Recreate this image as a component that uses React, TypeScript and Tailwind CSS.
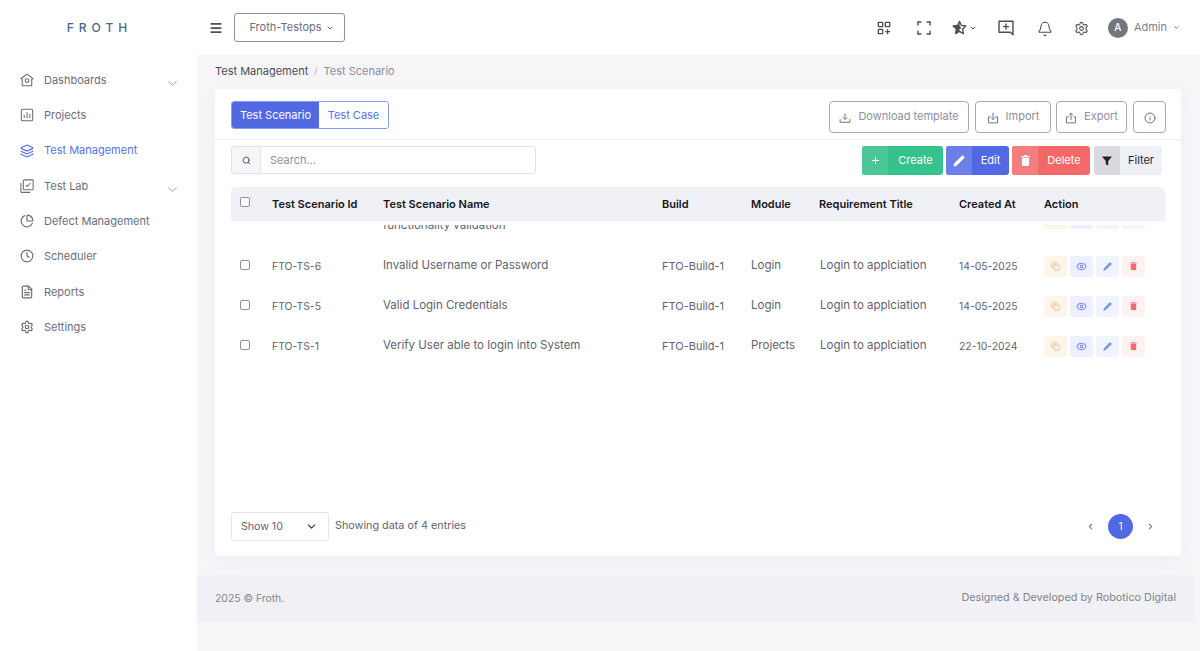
import React from "react";
import { ChevronDown, ChevronLeft, ChevronRight, Layers, ChartPie, Clock, FileText, Settings, Bell, Search, Plus, Pencil, Copy, Eye, Info, Menu } from "lucide-react";

const font = "font-['Inter','Liberation_Sans',sans-serif]";
type IconProps = { className?: string; fill?: string; strokeWidth?: number };

function HomeIcon({ className }: IconProps) {
  return (
    <svg viewBox="0 0 16 16" className={className} fill="none" stroke="currentColor" strokeWidth="1.2" strokeLinejoin="round">
      <path d="M8 1.2L1 6.6l1.6.6v7.3h10.8V7.2l1.6-.6z" />
      <circle cx="8" cy="8.6" r="2.1" />
    </svg>
  );
}
function ChartBox({ className }: IconProps) {
  return (
    <svg viewBox="0 0 16 16" className={className} fill="none" stroke="currentColor" strokeWidth="1.2">
      <rect x="1.5" y="1.5" width="13" height="13" rx="1.5" />
      <path d="M4.8 11.5V8M8 11.5V4.8M11.2 11.5V6.8" />
    </svg>
  );
}
function LabBox({ className }: IconProps) {
  return (
    <svg viewBox="0 0 16 16" className={className} fill="none" stroke="currentColor" strokeWidth="1.2">
      <rect x="3.8" y="1" width="11.2" height="11.2" rx=".8" />
      <path d="M6.8 6.8l1.7 1.8 3.4-4" />
      <path d="M1 4.5v10a.8.8 0 0 0 .8.8h10" />
    </svg>
  );
}
function GridPlus({ className }: IconProps) {
  return (
    <svg viewBox="0 0 16 16" className={className} fill="none" stroke="currentColor" strokeWidth="1.5">
      <rect x="1.5" y="1.5" width="5" height="5" rx=".6" />
      <rect x="9.5" y="1.5" width="5" height="5" rx=".6" />
      <rect x="1.5" y="9.5" width="5" height="5" rx=".6" />
      <path d="M12 9.5v5.5M9.5 12.2H15" />
    </svg>
  );
}
function Corners({ className }: IconProps) {
  return (
    <svg viewBox="0 0 16 16" className={className} fill="none" stroke="currentColor" strokeWidth="1.6">
      <path d="M1 5V1.2h4M11 1.2h4V5M15 11v3.8h-4M5 14.8H1V11" />
    </svg>
  );
}
function StarHalf({ className }: IconProps) {
  return (
    <svg viewBox="0 0 16 16" className={className} fill="none">
      <path d="M8 1.4l2 4.4 4.8.6-3.5 3.3.9 4.8L8 12.1l-4.2 2.4.9-4.8L1.2 6.4 6 5.8z" stroke="currentColor" strokeWidth="1.4" strokeLinejoin="round" />
      <path d="M8 1.4v10.7l-4.2 2.4.9-4.8L1.2 6.4 6 5.8z" fill="currentColor" />
      <path d="M8 5.5l-1 4 3-.5z" fill="currentColor" />
    </svg>
  );
}
function MessagePlus({ className }: IconProps) {
  return (
    <svg viewBox="0 0 16 16" className={className} fill="none" stroke="currentColor" strokeWidth="1.4">
      <path d="M1 1.2h14v13.6l-2.6-2.6H1z" strokeLinejoin="round" />
      <path d="M8 3.6v6M5 6.6h6" />
    </svg>
  );
}
function TrayDown({ className }: IconProps) {
  return (
    <svg viewBox="0 0 16 16" className={className} fill="none" stroke="currentColor" strokeWidth="1.3">
      <path d="M1.5 9.5v4.2h13V9.5M8 1.8v8M5 7l3 3 3-3" />
    </svg>
  );
}
function BoxDown({ className }: IconProps) {
  return (
    <svg viewBox="0 0 16 16" className={className} fill="none" stroke="currentColor" strokeWidth="1.3">
      <path d="M5 6.5H2v8h12v-8h-3M8 1v9M5.4 7.6L8 10.2l2.6-2.6" />
    </svg>
  );
}
function BoxUp({ className }: IconProps) {
  return (
    <svg viewBox="0 0 16 16" className={className} fill="none" stroke="currentColor" strokeWidth="1.3">
      <path d="M5 6.5H2v8h12v-8h-3M8 11V1.6M5.4 4.2L8 1.6l2.6 2.6" />
    </svg>
  );
}
function TrashSolid({ className }: IconProps) {
  return (
    <svg viewBox="0 0 10 12" className={className} fill="currentColor">
      <path d="M3.5 0h3v1H10v1.2H0V1h3.5zM1 3h8v8a1 1 0 0 1-1 1H2a1 1 0 0 1-1-1z" />
    </svg>
  );
}
function Funnel({ className }: IconProps) {
  return (
    <svg viewBox="0 0 12 12" className={className} fill="currentColor">
      <path d="M0 .5h12L7.5 6v5.5l-3-1.6V6z" />
    </svg>
  );
}

const nav = [
  { label: "Dashboards", Icon: HomeIcon, chev: true },
  { label: "Projects", Icon: ChartBox },
  { label: "Test Management", Icon: Layers, active: true },
  { label: "Test Lab", Icon: LabBox, chev: true },
  { label: "Defect Management", Icon: ChartPie },
  { label: "Scheduler", Icon: Clock },
  { label: "Reports", Icon: FileText },
  { label: "Settings", Icon: Settings },
];

const cols = "grid grid-cols-[41px_111px_279px_89px_68px_140px_85px_1fr]";

function Check({ className = "" }: { className?: string }) {
  return <span className={`block h-[10px] w-[10px] rounded-[2px] border border-[#8d8f9c] bg-white ${className}`} />;
}

function Actions() {
  return (
    <div className="flex -translate-y-[1px] gap-[3px]">
      <span className="flex h-[21px] w-[23px] items-center justify-center rounded-[3px] bg-[#fdf5ea] text-[#e3b27d]"><Copy className="h-[9px] w-[9px]" /></span>
      <span className="flex h-[21px] w-[23px] items-center justify-center rounded-[3px] bg-[#eef1fd] text-[#7d92ea]"><Eye className="h-[11px] w-[11px]" strokeWidth={2.4} /></span>
      <span className="flex h-[21px] w-[23px] items-center justify-center rounded-[3px] bg-[#eff4fd] text-[#7d96ea]"><Pencil className="h-[9px] w-[9px]" fill="currentColor" /></span>
      <span className="flex h-[21px] w-[23px] items-center justify-center rounded-[3px] bg-[#fdf1f1] text-[#f26a6a]"><TrashSolid className="h-[8px] w-[7px]" /></span>
    </div>
  );
}

const rows = [
  { id: "FTO-TS-6", name: "Invalid Username or Password", build: "FTO-Build-1", mod: "Login", date: "14-05-2025" },
  { id: "FTO-TS-5", name: "Valid Login Credentials", build: "FTO-Build-1", mod: "Login", date: "14-05-2025" },
  { id: "FTO-TS-1", name: "Verify User able to login into System", build: "FTO-Build-1", mod: "Projects", date: "22-10-2024" },
];

function ColorBtn({ icon, label, tint, solid, w, text = "text-white" }: { icon: React.ReactNode; label: string; tint: string; solid: string; w: string; text?: string }) {
  return (
    <button className={`flex h-[29px] items-stretch overflow-hidden rounded-[3px] ${w} ${solid} ${text}`}>
      <span className={`flex w-[26px] shrink-0 items-center justify-center ${tint}`}>{icon}</span>
      <span className="flex flex-1 items-center justify-center text-[11px]">{label}</span>
    </button>
  );
}

function OutlineBtn({ Icon, label, w }: { Icon: React.ComponentType<IconProps>; label: string; w: string }) {
  return (
    <button className={`flex h-[32px] items-center justify-center gap-[7px] rounded-[4px] border border-[#a5a8b8] text-[11px] text-[#8c90a0] ${w}`}>
      <Icon className="mt-[2px] h-[12px] w-[12px] text-[#6e7180]" />
      <span className="pb-[2px]">{label}</span>
    </button>
  );
}

export default function App() {
  return (
    <div className={`flex h-[651px] w-[1200px] overflow-hidden bg-[#f6f6f9] ${font}`}>
      <aside className="flex w-[197px] shrink-0 flex-col bg-white">
        <div className="flex h-[55px] items-center justify-center pl-[2px] pt-[1px] text-[12px] font-medium tracking-[5px] text-[#48658f]">FROTH</div>
        <nav className="flex flex-col gap-[13.3px] pt-[14px]">
          {nav.map(({ label, Icon, chev, active }) => (
            <div key={label} className={`relative flex h-[22px] items-center gap-[10px] pl-[20px] text-[11px] ${active ? "text-[#5a70e6]" : "text-[#6a6d7a]"}`}>
              <Icon className="h-[14px] w-[14px]" />
              <span>{label}</span>
              {chev && <ChevronDown className="absolute right-[17px] top-[7px] h-[15px] w-[15px] text-[#7c8090]" strokeWidth={1.2} />}
            </div>
          ))}
        </nav>
      </aside>

      <div className="flex min-w-0 flex-1 flex-col">
        <header className="flex h-[55px] shrink-0 items-center bg-white pl-[12px] pr-[20px]">
          <Menu className="h-[14px] w-[14px] text-[#4a4d5a]" strokeWidth={3} />
          <button className="ml-[11px] flex h-[29px] w-[111px] items-center justify-center gap-[4px] rounded-[3px] border border-[#8d90a0] pl-[4px] text-[11px] text-[#6a6d7a]">
            Froth-Testops <ChevronDown className="h-[8px] w-[8px]" strokeWidth={3} />
          </button>
          <div className="ml-auto flex items-center text-[#4a4d5a]">
            <GridPlus className="h-[14px] w-[14px]" />
            <Corners className="ml-[26px] h-[14px] w-[14px]" />
            <StarHalf className="ml-[21px] h-[15px] w-[15px]" />
            <ChevronDown className="ml-[2px] h-[8px] w-[8px]" strokeWidth={3} />
            <MessagePlus className="ml-[21px] h-[16px] w-[16px]" />
            <Bell className="ml-[23px] mt-[2px] h-[16px] w-[16px]" strokeWidth={1.6} />
            <Settings className="ml-[21px] mt-[1px] h-[15px] w-[15px]" strokeWidth={1.7} />
            <span className="ml-[19px] flex h-[20px] w-[20px] items-center justify-center rounded-full bg-[#74767f] text-[10px] font-medium text-white">A</span>
            <span className="ml-[6px] text-[11px] text-[#7c7f8c]">Admin</span>
            <ChevronDown className="ml-[6px] h-[7px] w-[7px] text-[#6a6d7a]" strokeWidth={3} />
          </div>
        </header>

        <main className="flex min-h-0 flex-1 flex-col pl-[18px]">
          <div className="flex h-[34px] shrink-0 items-center gap-[6px] pb-[2px] text-[11px]">
            <span className="text-[#4a4d5a]">Test Management</span>
            <span className="text-[9px] text-[#b0b3bd]">/</span>
            <span className="text-[#8a8d99]">Test Scenario</span>
          </div>

          <section className="flex h-[467px] w-[966px] flex-col rounded-[4px] bg-white shadow-[0_4px_16px_rgba(120,120,160,0.06)]">
            <div className="flex h-[51px] shrink-0 items-start justify-between border-b border-[#f0f1f4] pl-[16px] pr-[15px] pt-[12px]">
              <div className="flex h-[28px] overflow-hidden rounded-[3px] border border-[#8a9bee] text-[11px]">
                <span className="flex w-[87px] items-center justify-center bg-[#5169e3] text-white">Test Scenario</span>
                <span className="flex w-[69px] items-center justify-center bg-white text-[#5a70e6]">Test Case</span>
              </div>
              <div className="flex gap-[6px]">
                <OutlineBtn Icon={TrayDown} label="Download template" w="w-[140px]" />
                <OutlineBtn Icon={BoxDown} label="Import" w="w-[76px] -mr-px" />
                <OutlineBtn Icon={BoxUp} label="Export" w="w-[71px]" />
                <button className="flex h-[32px] w-[33px] items-center justify-center rounded-[4px] border border-[#a5a8b8] text-[#6e7180]">
                  <Info className="mt-[2px] h-[12px] w-[12px]" />
                </button>
              </div>
            </div>

            <div className="flex h-[47px] shrink-0 items-start justify-between pl-[16px] pr-[19px] pt-[6px]">
              <div className="flex h-[28px] w-[305px] overflow-hidden rounded-[3px] border border-[#dfe1e8] text-[11px]">
                <span className="flex w-[29px] items-center justify-center border-r border-[#e4e6ec] bg-[#f6f6f9] text-[#4a4d5a]">
                  <Search className="h-[9px] w-[9px]" strokeWidth={2.4} />
                </span>
                <span className="flex items-center pl-[9px] text-[#8c8f9c]">Search...</span>
              </div>
              <div className="flex gap-[3px]">
                <ColorBtn icon={<Plus className="h-[11px] w-[11px]" />} label="Create" tint="bg-[#4bc795]" solid="bg-[#35c28b]" w="w-[81px]" />
                <ColorBtn icon={<Pencil className="h-[12px] w-[12px]" fill="currentColor" />} label="Edit" tint="bg-[#6a80e8]" solid="bg-[#5169e3]" w="w-[63px]" />
                <ColorBtn icon={<TrashSolid className="h-[11px] w-[9px]" />} label="Delete" tint="bg-[#f47d7d]" solid="bg-[#f56868]" w="w-[78px]" />
                <div className="ml-[1px]">
                  <ColorBtn icon={<Funnel className="h-[10px] w-[10px]" />} label="Filter" tint="bg-[#d9dae0]" solid="bg-[#eff0f6]" w="w-[68px]" text="text-[#22242c]" />
                </div>
              </div>
            </div>

            <div className="mx-[16px] flex min-h-0 flex-1 flex-col">
              <div className={`${cols} h-[34px] shrink-0 items-center rounded-t-[5px] bg-[#eff1f6] text-[11px] font-semibold text-[#15161b]`}>
                <span className="pl-[9px]"><Check className="-translate-y-[2px]" /></span>
                <span>Test Scenario Id</span>
                <span>Test Scenario Name</span>
                <span>Build</span>
                <span>Module</span>
                <span>Requirement Title</span>
                <span>Created At</span>
                <span>Action</span>
              </div>
              <div className="shrink-0 pt-[4px]">
                <div className="h-[287px] overflow-hidden text-[11.5px] text-[#5f626f]">
                  <div className={`${cols} -mt-[34px] h-[56px] items-center`}>
                    <span />
                    <span />
                    <span className="col-span-5 pt-[14px]">functionality validation</span>
                    <Actions />
                  </div>
                  {rows.map((r) => (
                    <div key={r.id} className={`${cols} h-[40px] items-center`}>
                      <span className="pl-[9px]"><Check className="-translate-y-[2px]" /></span>
                      <span className="text-[10.4px]">{r.id}</span>
                      <span className="-translate-y-[1px]">{r.name}</span>
                      <span className="-translate-y-[1px] text-[11px]">{r.build}</span>
                      <span className="-translate-y-[1px]">{r.mod}</span>
                      <span className="-translate-y-[1px] pl-[1px]">Login to applciation</span>
                      <span className="text-[10.4px]">{r.date}</span>
                      <Actions />
                    </div>
                  ))}
                </div>
              </div>
              <div className="flex items-center">
                <div className="flex h-[29px] w-[98px] items-center justify-between rounded-[3px] border border-[#e2e4ea] pl-[9px] pr-[10px] text-[10.6px] text-[#5f626f]">
                  Show 10 <ChevronDown className="h-[13px] w-[13px] text-[#33353f]" />
                </div>
                <span className="ml-[6px] text-[10.8px] text-[#5f626f]">Showing data of 4 entries</span>
                <div className="ml-auto flex items-center pr-[10px] text-[#7a7d89]">
                  <ChevronLeft className="h-[9px] w-[9px]" strokeWidth={3} />
                  <span className="mx-[13px] flex h-[25px] w-[25px] items-center justify-center rounded-full bg-[#5169e3] text-[10px] text-white">1</span>
                  <ChevronRight className="h-[9px] w-[9px]" strokeWidth={3} />
                </div>
              </div>
            </div>
          </section>

          <footer className="ml-[-18px] mt-[19px] flex h-[47px] w-[998px] shrink-0 items-center justify-between bg-[#f0f0f5] pl-[18px] pr-[19px] text-[10.8px] text-[#82858f]">
            <span className="text-[10.4px]">2025 © Froth.</span>
            <span>Designed &amp; Developed by Robotico Digital</span>
          </footer>
        </main>
      </div>
    </div>
  );
}
